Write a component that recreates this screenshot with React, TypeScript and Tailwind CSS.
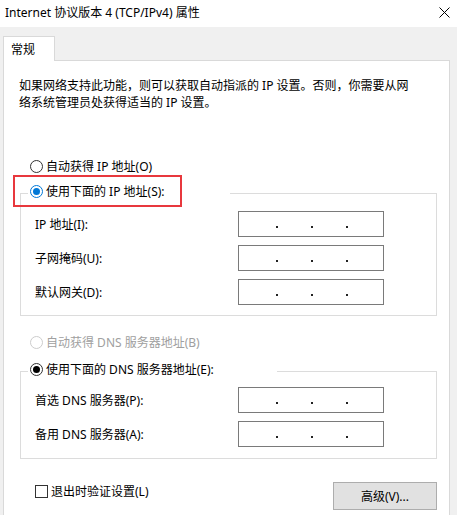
import React from "react";

type RadioState = "off" | "blue" | "black" | "disabled";

function Radio({ state }: { state: RadioState }) {
  const ring =
    state === "blue" ? "#0078d7" : state === "disabled" ? "#cccccc" : "#333333";
  const dot = state === "blue" ? "#0078d7" : state === "black" ? "#000000" : null;
  return (
    <svg width="13" height="13" viewBox="0 0 13 13" className="shrink-0">
      <circle cx="6.5" cy="6.5" r="6" fill="#ffffff" stroke={ring} strokeWidth="1" />
      {dot && <circle cx="6.5" cy="6.5" r="3.5" fill={dot} />}
    </svg>
  );
}

function IpBox() {
  return (
    <div className="w-[146px] h-[26px] border border-[#7a7a7a] bg-white flex items-start pt-[14px] pl-[37px] gap-[33px]">
      <div className="w-[2px] h-[2px] bg-[#222]" />
      <div className="w-[2px] h-[2px] bg-[#222]" />
      <div className="w-[2px] h-[2px] bg-[#222]" />
    </div>
  );
}

function Field({ label }: { label: string }) {
  return (
    <div className="flex items-center h-[26px]">
      <div className="w-[203px] leading-[17px]">{label}</div>
      <IpBox />
    </div>
  );
}

const ipFields = ["IP 地址(I):", "子网掩码(U):", "默认网关(D):"];
const dnsFields = ["首选 DNS 服务器(P):", "备用 DNS 服务器(A):"];

export default function App() {
  return (
    <div className="w-[457px] h-[515px] overflow-hidden flex flex-col bg-[#f0f0f0] text-[12px] text-black font-['Noto_Sans','Noto_Sans_CJK_SC',sans-serif]">
      {/* title bar */}
      <div className="h-[27px] shrink-0 bg-white flex justify-between pl-[5px] pr-[7px]">
        <div className="leading-[17px] mt-[4px]">Internet 协议版本 4 (TCP/IPv4) 属性</div>
        <svg width="11" height="11" viewBox="0 0 11 11" className="mt-[7px]">
          <path d="M0.5 0.5 L10.5 10.5 M10.5 0.5 L0.5 10.5" stroke="#000" strokeWidth="1" />
        </svg>
      </div>

      <div className="flex-1 pl-[3px] pr-[7px] pt-[9px] flex flex-col">
        <div className="relative z-10 -mb-px w-[52px] h-[25px] border border-b-0 border-[#d9d9d9] bg-white pl-[7px] flex items-center leading-[17px]">
          常规
        </div>

        <div className="h-[470px] shrink-0 border border-[#d9d9d9] bg-white flex flex-col">
          <div className="mt-[16px] ml-[15px] leading-[17px]">
            如果网络支持此功能，则可以获取自动指派的 IP 设置。否则，你需要从网
            <br />
            络系统管理员处获得适当的 IP 设置。
          </div>

          <div className="mt-[47px] ml-[26px] h-[17px] flex items-center gap-[3px] leading-[17px]">
            <Radio state="off" />
            <span>自动获得 IP 地址(O)</span>
          </div>

          <div className="relative mt-[18px] ml-[16px] w-[417px] border border-[#dcdcdc] pt-[17px] pb-[10px] pl-[14px] flex flex-col gap-[8px]">
            <div className="absolute left-[7px] top-[-11px] w-[202px] h-[17px] bg-white pl-[2px] flex items-center gap-[3px] leading-[17px]">
              <Radio state="blue" />
              <span>使用下面的 IP 地址(S):</span>
            </div>
            <div className="absolute left-[-8px] top-[-19px] w-[169px] h-[32px] border-2 border-[#e8383d]" />
            {ipFields.map((f) => (
              <Field key={f} label={f} />
            ))}
          </div>

          <div className="mt-[18px] ml-[26px] h-[17px] flex items-center gap-[3px] leading-[17px] text-[#a0a0a0]">
            <Radio state="disabled" />
            <span>自动获得 DNS 服务器地址(B)</span>
          </div>

          <div className="relative mt-[20px] ml-[16px] w-[417px] border border-[#dcdcdc] pt-[15px] pb-[11px] pl-[14px] flex flex-col gap-[8px]">
            <div className="absolute left-[7px] top-[-11px] w-[249px] h-[17px] bg-white pl-[2px] flex items-center gap-[3px] leading-[17px]">
              <Radio state="black" />
              <span>使用下面的 DNS 服务器地址(E):</span>
            </div>
            {dnsFields.map((f) => (
              <Field key={f} label={f} />
            ))}
          </div>

          <div className="mt-[23px] ml-[31px] mr-[12px] flex justify-between items-start">
            <div className="mt-[1px] h-[17px] flex items-center gap-[3px] leading-[17px]">
              <div className="w-[13px] h-[13px] border border-[#333] bg-white" />
              <span>退出时验证设置(L)</span>
            </div>
            <div className="w-[104px] h-[28px] border border-[#adadad] bg-[#e1e1e1] flex items-center justify-center leading-[17px]">
              高级(V)...
            </div>
          </div>
        </div>
      </div>
    </div>
  );
}
